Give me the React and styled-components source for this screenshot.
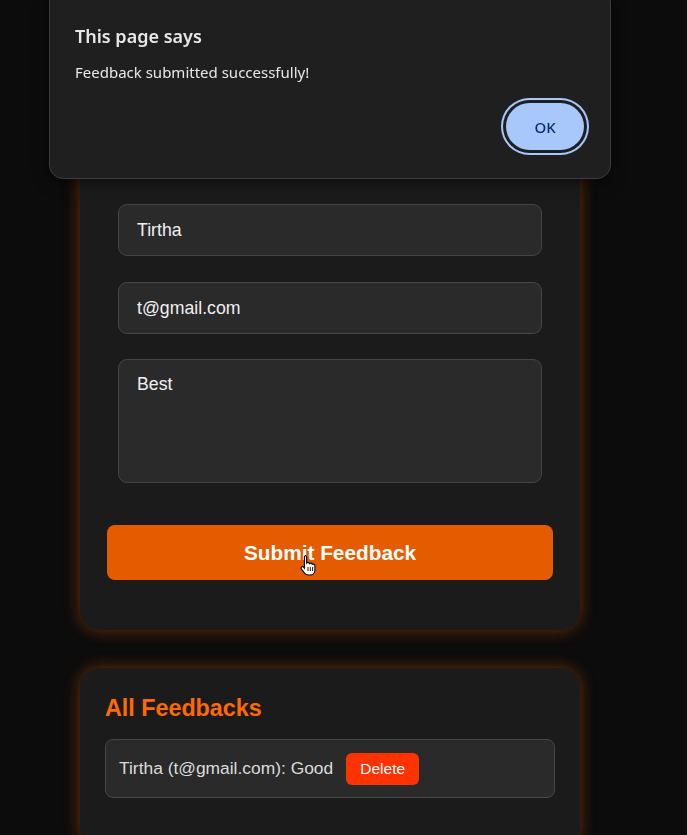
import React from 'react'
import styled, { createGlobalStyle } from 'styled-components'

const GlobalStyle = createGlobalStyle`
  html, body {
    margin: 0;
    padding: 0;
    background: #0c0c0c;
    font-family: 'Liberation Sans', Arial, sans-serif;
    overflow: hidden;
  }
  * {
    box-sizing: border-box;
  }
`

const Page = styled.div`
  min-height: 835px;
  padding: 100px 0 0 80px;
`

const Column = styled.div`
  width: 500px;
  display: flex;
  flex-direction: column;
  gap: 38px;
`

const Card = styled.div`
  background: #1b1b1b;
  border-radius: 20px;
  padding: 25px 25px ${(p) => p.bottom || 25}px;
  box-shadow: 0 0 16px rgba(255, 98, 0, 0.4);
`

const FormTitle = styled.h2`
  margin: 5px 0 48px;
  text-align: center;
  color: #ff6a00;
  font-size: 24px;
  line-height: 26px;
`

const Form = styled.form`
  display: flex;
  flex-direction: column;
  align-items: center;
`

const Field = styled.div`
  width: 424px;
  height: ${(p) => p.height || 52}px;
  margin-bottom: ${(p) => p.gap || 26}px;
  background: #2a2a2a;
  border: 1px solid #454545;
  border-radius: 9px;
  padding: ${(p) => (p.multiline ? '14px 18px' : '0 18px')};
  display: flex;
  align-items: ${(p) => (p.multiline ? 'flex-start' : 'center')};
  color: #f0f0f0;
  font-size: 17.7px;
`

const SubmitButton = styled.button`
  position: relative;
  width: 446px;
  height: 55px;
  margin-top: 16px;
  border: none;
  border-radius: 8px;
  background: #e55c00;
  color: #ffffff;
  font-family: 'Liberation Sans', Arial, sans-serif;
  font-weight: bold;
  font-size: 20.8px;
  cursor: pointer;
`

const Cursor = styled.svg`
  position: absolute;
  left: 193px;
  top: 29px;
`

const ListTitle = styled.h2`
  margin: 2px 0 18px;
  color: #ff6a00;
  font-size: 23.3px;
  line-height: 26px;
`

const Item = styled.div`
  height: 59px;
  background: #2a2a2a;
  border: 1px solid #474747;
  border-radius: 8px;
  padding: 0 13px;
  display: flex;
  align-items: center;
  gap: 13px;
  color: #dcdcdc;
  font-size: 17.4px;
`

const DeleteButton = styled.button`
  height: 32px;
  width: 73px;
  padding: 0;
  border: none;
  border-radius: 6px;
  background: #ff3300;
  color: #ffffff;
  font-family: 'Liberation Sans', Arial, sans-serif;
  font-size: 15.5px;
`

const Dialog = styled.div`
  position: fixed;
  left: 49px;
  top: -12px;
  width: 562px;
  height: 191px;
  background: #1f1f1f;
  border: 1px solid #3d3d3d;
  border-radius: 14px;
  padding: 35px 26px 0 25px;
  font-family: 'Noto Sans', 'Open Sans', sans-serif;
  box-shadow: 0 4px 16px rgba(0, 0, 0, 0.5);
`

const DialogTitle = styled.div`
  color: #e8e8e8;
  font-size: 18px;
  font-weight: 600;
  line-height: 24px;
`

const DialogText = styled.div`
  margin-top: 14px;
  color: #e8e8e8;
  font-size: 15px;
  line-height: 20px;
`

const DialogActions = styled.div`
  display: flex;
  justify-content: flex-end;
  margin-top: 21px;
`

const OkButton = styled.button`
  width: 78px;
  height: 47px;
  border: none;
  border-radius: 999px;
  background: #a8c7fa;
  color: #062e6f;
  font-family: 'Noto Sans', 'Open Sans', sans-serif;
  font-size: 15px;
  font-weight: 500;
  box-shadow: 0 0 0 3px #1f1f1f, 0 0 0 5px #a8c7fa;
`

const feedbacks = [{ name: 'Tirtha', email: 't@gmail.com', message: 'Good' }]

export default function App() {
  return (
    <>
      <GlobalStyle />
      <Page>
        <Column>
          <Card bottom={25}>
            <FormTitle>Feedback Form</FormTitle>
            <Form onSubmit={(e) => e.preventDefault()}>
              <Field>Tirtha</Field>
              <Field gap={25}>t@gmail.com</Field>
              <Field multiline height={124} gap={26}>
                Best
              </Field>
              <SubmitButton type='submit' style={{ marginBottom: 25 }}>
                Submit Feedback
                <Cursor width='18' height='22' viewBox='0 0 18 22'>
                  <path
                    d='M5 1.5c.9 0 1.6.7 1.6 1.6V9c.3-.4.8-.6 1.3-.6.8 0 1.4.5 1.6 1.2.3-.3.8-.5 1.2-.5.8 0 1.5.6 1.6 1.3.3-.2.6-.3 1-.3.9 0 1.6.7 1.6 1.6v4.2c0 2.9-2.2 5.1-5 5.1H8.3c-1.5 0-2.8-.7-3.7-1.8L1.4 15c-.5-.7-.4-1.6.3-2.1.6-.4 1.5-.3 2 .3l.7.9V3.1c0-.9.7-1.6 1.6-1.6z'
                    fill='#ffffff'
                    stroke='#000000'
                    strokeWidth='1.1'
                  />
                  <path d='M8 13v4M10.3 13v4M12.6 13v4' stroke='#000' strokeWidth='0.9' />
                </Cursor>
              </SubmitButton>
            </Form>
          </Card>
          <Card bottom={50}>
            <ListTitle>All Feedbacks</ListTitle>
            {feedbacks.map((f, i) => (
              <Item key={i}>
                <span>
                  {f.name} ({f.email}): {f.message}
                </span>
                <DeleteButton>Delete</DeleteButton>
              </Item>
            ))}
          </Card>
        </Column>
      </Page>
      <Dialog>
        <DialogTitle>This page says</DialogTitle>
        <DialogText>Feedback submitted successfully!</DialogText>
        <DialogActions>
          <OkButton>OK</OkButton>
        </DialogActions>
      </Dialog>
    </>
  )
}
